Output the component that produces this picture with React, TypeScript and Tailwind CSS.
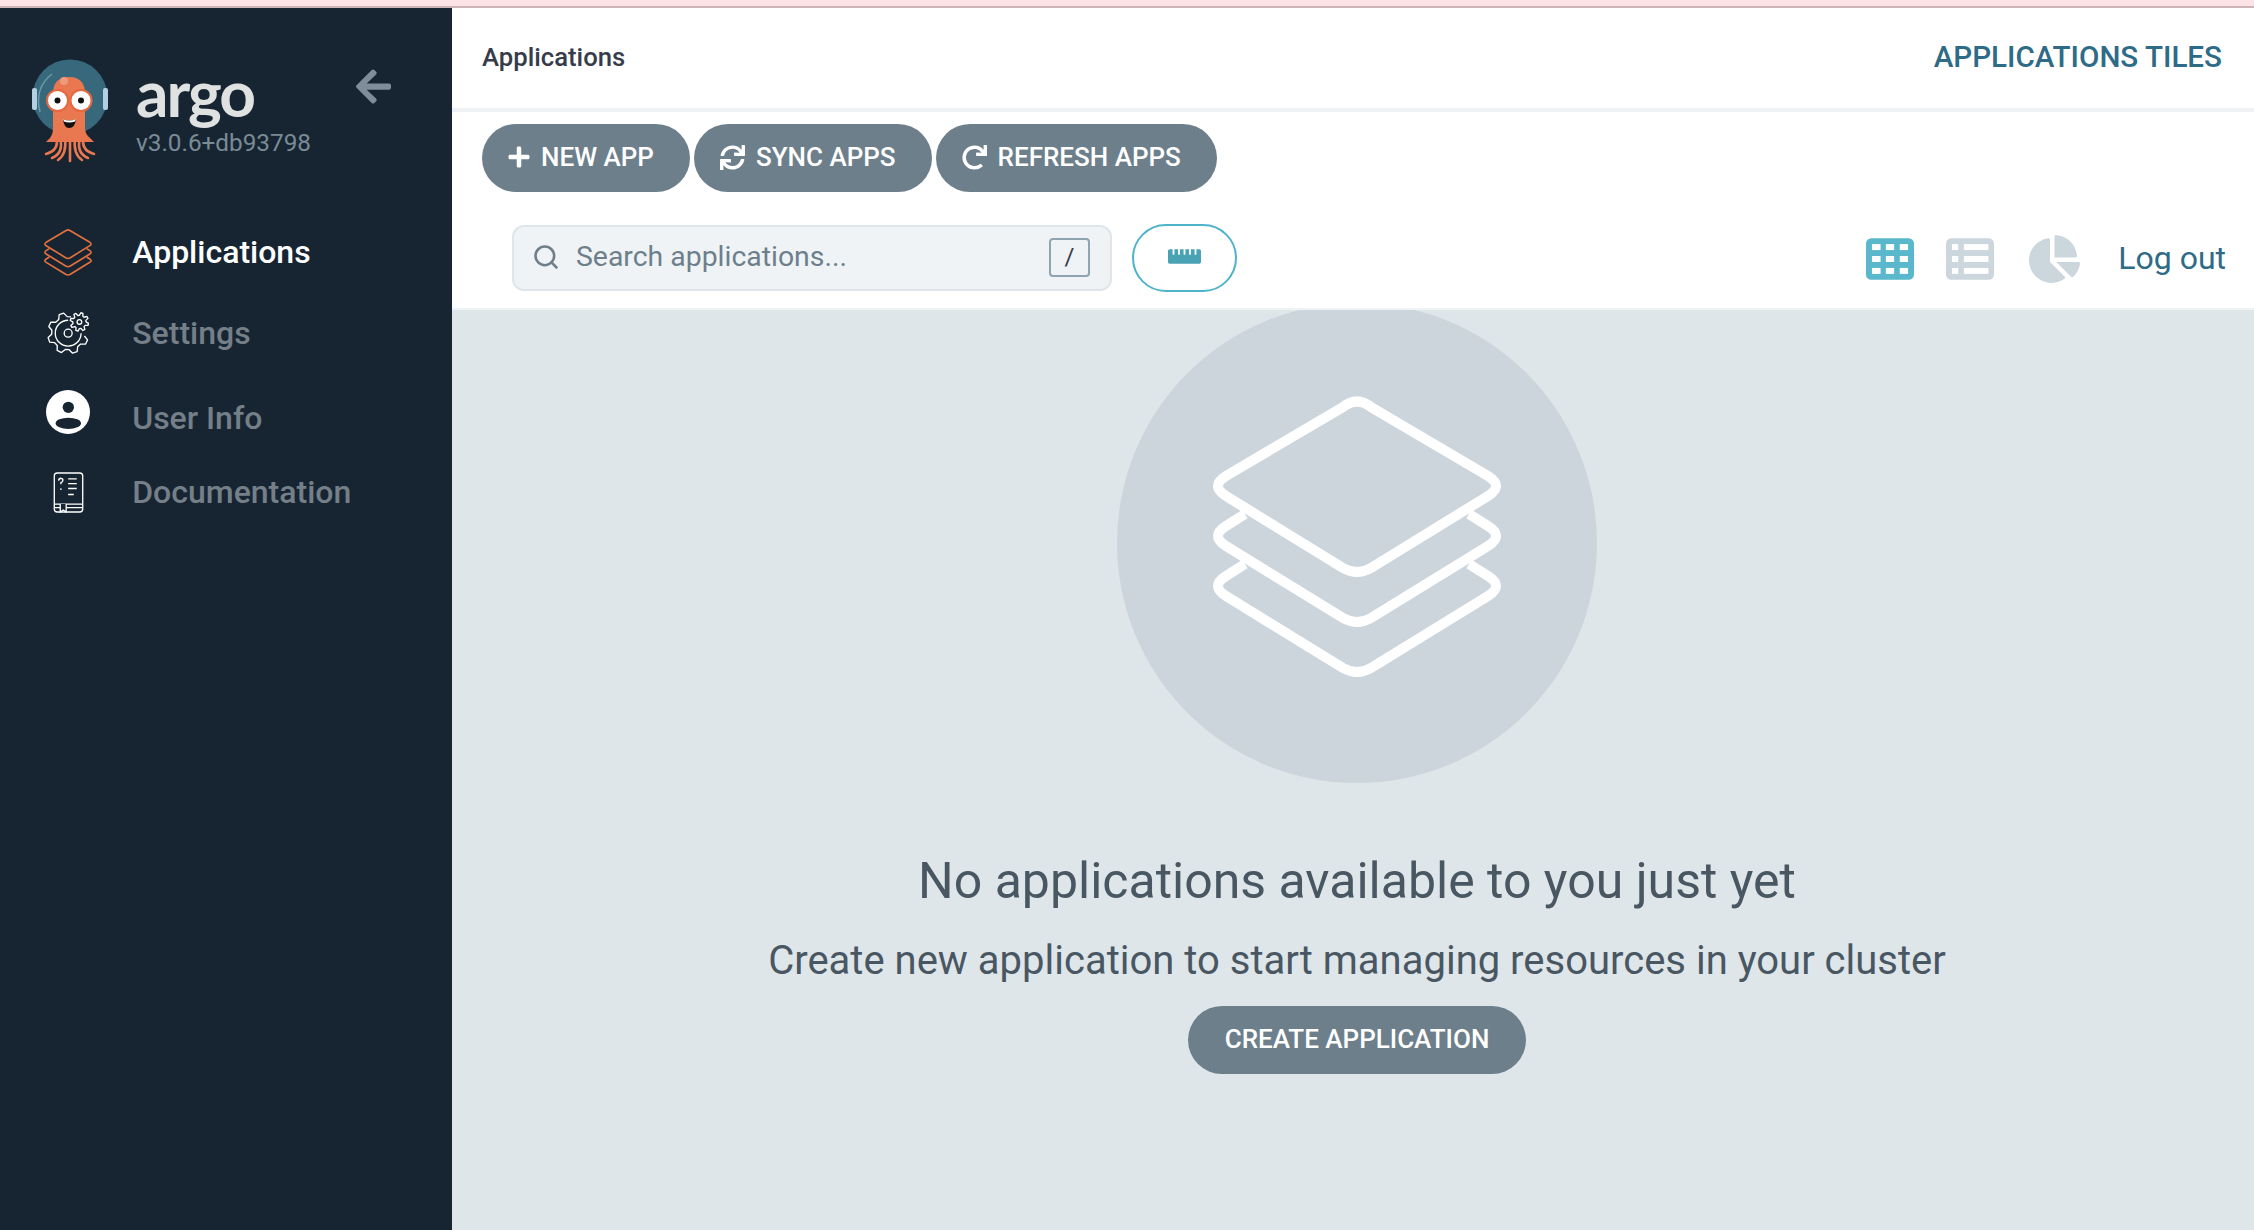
import { FaArrowLeft, FaChartPie, FaPlus, FaRedo, FaRulerHorizontal, FaSync } from "react-icons/fa";
import { Search } from "lucide-react";

const roboto = "font-['Roboto',sans-serif]";

function StackIcon({ className, stroke }: { className: string; stroke: string }) {
  return (
    <svg viewBox="0 0 288 282" className={className} fill="none" stroke={stroke} strokeWidth="10">
      <path d="M130 11Q144 0 158 11L275 80Q291 90 275 100L158 172Q144 180 130 172L13 100Q-3 90 13 80Z" />
      <path d="M32 118L13 130Q-3 140 13 150L130 222Q144 230 158 222L275 150Q291 140 275 130L256 118" />
      <path d="M32 168L13 180Q-3 190 13 200L130 272Q144 280 158 272L275 200Q291 190 275 180L256 168" />
    </svg>
  );
}

// gear outline between two angles, in degrees
function gearPath(cx: number, cy: number, outer: number, inner: number, teeth: number, from: number, to: number) {
  const step = 360 / teeth;
  const pts: string[] = [];
  for (let a = from; a < to - 0.1; a += step) {
    const at = [
      [a, inner],
      [a + step * 0.2, outer],
      [a + step * 0.5, outer],
      [a + step * 0.7, inner],
      [a + step, inner],
    ];
    for (const [d, r] of at) {
      const rad = (d * Math.PI) / 180;
      pts.push(`${(cx + r * Math.cos(rad)).toFixed(1)} ${(cy + r * Math.sin(rad)).toFixed(1)}`);
    }
  }
  return "M" + pts.join("L");
}

function SettingsIcon() {
  return (
    <svg viewBox="0 0 127 127" className="w-[42px] h-[42px]" fill="none" stroke="#fff" strokeWidth="4" strokeLinejoin="round">
      <path d={gearPath(64, 64, 62, 50, 8, 10, 280)} />
      <path d="M64 25A39 39 0 1 0 103 64" />
      <circle cx="64" cy="64" r="12" />
      <path d={gearPath(98, 30, 28, 20, 8, 0, 360) + "Z"} />
      <circle cx="98" cy="30" r="7" />
    </svg>
  );
}

function UserIcon() {
  return (
    <svg viewBox="0 0 132 132" className="w-[44px] h-[44px]">
      <circle cx="66" cy="66" r="66" fill="#fff" />
      <circle cx="67" cy="52" r="17" fill="#172533" />
      <ellipse cx="67" cy="100" rx="38" ry="17" fill="#172533" />
    </svg>
  );
}

function DocIcon() {
  return (
    <svg viewBox="0 0 92 124" className="w-[31px] h-[41px]" fill="none" stroke="#fff" strokeWidth="4">
      <path d="M12 3H80Q89 3 89 12V112Q89 121 80 121H12Q3 121 3 112V12Q3 3 12 3Z" />
      <path d="M3 97H89M3 108H89" />
      <path d="M21 97V121L30 115L39 121V97" fill="#172533" />
      <path d="M16 26Q17 19 23 19Q30 20 29 26Q28 30 23 32V37" />
      <circle cx="23" cy="52" r="2.5" fill="#fff" stroke="none" />
      <path d="M45 21H71M45 35H71M45 50H71M45 68H62" />
    </svg>
  );
}

function ArgoLogo() {
  return (
    <svg viewBox="0 0 100 120" className="w-[100px] h-[120px]">
      <circle cx="50" cy="47" r="37.5" fill="#37687c" />
      <path d="M20 62Q14 38 32 24" fill="none" stroke="#6c9aa8" strokeWidth="1.5" />
      <rect x="12" y="38" width="5" height="22" rx="2" fill="#b5cfe2" />
      <rect x="83" y="38" width="5" height="22" rx="2" fill="#b5cfe2" />
      <path d="M33 44Q33 27 49 27Q65 27 65 44V78Q65 84 70 88L74 92H26L30 88Q33 84 33 78Z" fill="#e9774f" />
      <g fill="none" stroke="#e9774f" strokeWidth="2.6" strokeLinecap="round">
        <path d="M36 86Q40 100 26 104" />
        <path d="M40 88Q44 103 32 108" />
        <path d="M45 88Q47 104 38 110" />
        <path d="M50 88V111" />
        <path d="M55 88Q53 104 62 110" />
        <path d="M60 88Q56 103 68 108" />
        <path d="M64 86Q60 100 74 104" />
      </g>
      <circle cx="44" cy="31" r="4" fill="#f09a7b" />
      <circle cx="37.5" cy="50.5" r="10.5" fill="#fff" stroke="#e5683f" strokeWidth="2" />
      <circle cx="61" cy="50.5" r="10.5" fill="#fff" stroke="#e5683f" strokeWidth="2" />
      <circle cx="37.5" cy="50.5" r="3" fill="#111" />
      <circle cx="61" cy="50.5" r="3" fill="#111" />
      <path d="M43 69Q49 72 56 69Q55 78 49 78Q44 78 43 69Z" fill="#111" />
      <path d="M43 69Q49 72 56 69L55 71.5Q49 73.5 44 71.5Z" fill="#fff" />
    </svg>
  );
}

// tile and list toggles: solid rounded block with the cells cut out in white
function GridToggle({ color, cells }: { color: string; cells: number[][] }) {
  const rows = [18, 54, 90];
  return (
    <svg viewBox="0 0 145 126" className="w-[48px] h-[42px]">
      <rect width="145" height="126" rx="16" fill={color} />
      {rows.map((y) => cells.map(([x, w]) => <rect key={`${x}-${y}`} x={x} y={y} width={w} height="18" fill="#fff" />))}
    </svg>
  );
}

function NavRow({ label, active, icon, className, iconClass }: { label: string; active?: boolean; icon: React.ReactNode; className: string; iconClass?: string }) {
  return (
    <div className={`flex items-center h-[60px] ${className}`}>
      <div className={`w-[136px] -mr-[3.8px] flex justify-center shrink-0 ${iconClass ?? ""}`}>{icon}</div>
      <span className={`text-[32px] font-medium ${active ? "text-white" : "text-[#747f88]"}`}>{label}</span>
    </div>
  );
}

function PillButton({ icon, label, spacing }: { icon: React.ReactNode; label: string; spacing: string }) {
  return (
    <button className={`h-[68px] flex items-center ${spacing} pr-[36px] pb-[2px] rounded-full bg-[#6d7f8b] text-white text-[26px] font-medium`}>
      {icon}
      {label}
    </button>
  );
}

export default function App() {
  return (
    <div className={`h-screen w-full flex flex-col overflow-hidden ${roboto}`}>
      <div className="h-[8px] shrink-0 bg-[#fbe3e6] border-b-[2px] border-[#cdb5ba]" />
      <div className="flex flex-1 min-h-0">
        <aside className="w-[452px] shrink-0 bg-[#172533]">
          <div className="h-[214px] relative flex">
            <div className="pl-[20px] pt-[42px]">
              <ArgoLogo />
            </div>
            <div className="pl-[16px] pt-[50px] flex flex-col">
              <span className="text-[64px] leading-[70px] font-bold text-[#e0e2e2] font-['Lato',sans-serif] tracking-[-2px]">argo</span>
              <span className="text-[24.3px] leading-[30px] text-[#7a8b96]">v3.0.6+db93798</span>
            </div>
            <FaArrowLeft className="absolute left-[356px] top-[58px] w-[35px] h-[41px] text-[#7f8d98]" />
          </div>
          <NavRow label="Applications" active icon={<StackIcon className="w-[48px] h-[47px]" stroke="#e2703d" />} className="" />
          <NavRow label="Settings" icon={<SettingsIcon />} className="mt-[21px]" />
          <NavRow label="User Info" icon={<UserIcon />} className="mt-[25px]" iconClass="-mt-[12px]" />
          <NavRow label="Documentation" icon={<DocIcon />} className="mt-[14px]" />
        </aside>
        <main className="flex-1 min-w-0 flex flex-col">
          <div className="h-[104px] shrink-0 bg-white border-b-[4px] border-[#eff2f5] pl-[30px] pr-[32px] pb-[2px] flex items-center justify-between">
            <span className="text-[25.7px] font-medium text-[#363c4a]">Applications</span>
            <span className="text-[29.6px] font-medium text-[#2e6b87]">APPLICATIONS TILES</span>
          </div>
          <div className="h-[198px] shrink-0 bg-white border-b-[2px] border-[#eff3f6] pl-[30px] pr-[28px] pt-[12px]">
            <div className="flex gap-[4px]">
              <PillButton spacing="pl-[25px] gap-[10px]" icon={<FaPlus className="w-[24px] h-[24px]" />} label="NEW APP" />
              <PillButton spacing="pl-[26px] gap-[11px]" icon={<FaSync className="w-[25px] h-[25px]" />} label="SYNC APPS" />
              <PillButton spacing="pl-[26px] gap-[11px]" icon={<FaRedo className="w-[25px] h-[25px]" />} label="REFRESH APPS" />
            </div>
            <div className="flex items-center mt-[32px] pl-[30px]">
              <div className="w-[600px] h-[66px] pb-[2px] flex items-center rounded-[12px] border-[2px] border-[#dee6eb] bg-[#eff3f6] pl-[18px] pr-[20px]">
                <Search className="w-[28px] h-[28px] text-[#6d7f8b]" strokeWidth={2.2} />
                <span className="ml-[16px] flex-1 text-[28.4px] text-[#6d7f8b]">Search applications...</span>
                <span className="w-[41px] h-[39px] flex items-center justify-center rounded-[4px] border-[2px] border-[#8fa4b1] text-[24px] text-[#363c4a]">/</span>
              </div>
              <button className="ml-[20px] w-[105px] h-[68px] pb-[3px] flex items-center justify-center rounded-full border-[2px] border-[#4fb4cb] bg-white">
                <FaRulerHorizontal className="w-[33px] h-[33px] text-[#4aa3b5]" />
              </button>
              <div className="ml-auto flex items-center">
                <span className="mt-[2px]">
                  <GridToggle color="#5ab8cc" cells={[[18, 26], [60, 25], [102, 25]]} />
                </span>
                <span className="ml-[32px] mt-[2px]">
                  <GridToggle color="#ccd6dd" cells={[[18, 19], [54, 74]]} />
                </span>
                <FaChartPie className="ml-[35px] mt-[2px] w-[51px] h-[48px] text-[#ccd6dd]" />
                <span className="ml-[38px] text-[32px] text-[#2e6b87]">Log out</span>
              </div>
            </div>
          </div>
          <div className="flex-1 min-h-0 overflow-hidden bg-[#dee6ea] pl-[8px] flex flex-col items-center">
            <div className="w-[480px] h-[480px] shrink-0 -mt-[7px] rounded-full bg-[#ccd5dc] flex items-center justify-center">
              <StackIcon className="w-[288px] h-[282px] mb-[12px]" stroke="#fff" />
            </div>
            <div className="mt-[70px] text-[50px] leading-[56px] text-[#495763]">No applications available to you just yet</div>
            <div className="mt-[27px] text-[40px] leading-[50px] text-[#495763]">Create new application to start managing resources in your cluster</div>
            <button className="mt-[20px] w-[338px] h-[68px] pb-[2px] rounded-full bg-[#6d7f8b] text-white text-[26px] font-medium">CREATE APPLICATION</button>
          </div>
        </main>
      </div>
    </div>
  );
}
